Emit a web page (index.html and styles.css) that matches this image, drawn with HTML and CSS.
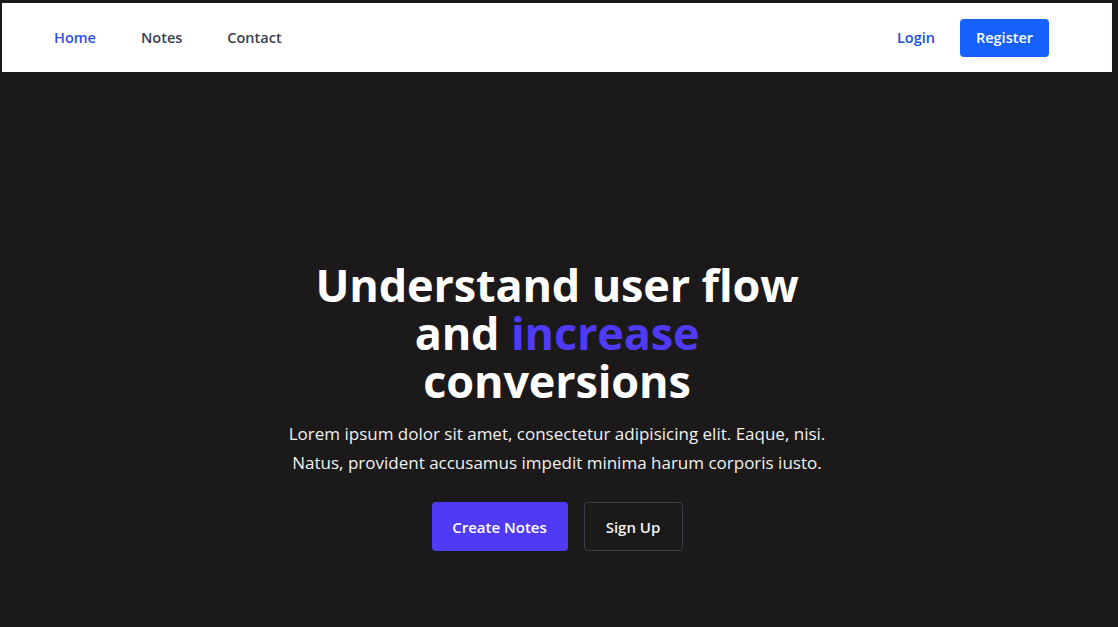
FILE: index.html
```html
<!DOCTYPE html>
<html lang="en">
<head>
<meta charset="utf-8">
<title>Notes</title>
<link rel="stylesheet" href="styles.css">
</head>
<body>
<nav class="nav">
  <div class="nav-left">
    <a class="nav-link active" href="#">Home</a>
    <a class="nav-link" href="#">Notes</a>
    <a class="nav-link" href="#">Contact</a>
  </div>
  <div class="nav-right">
    <a class="login" href="#">Login</a>
    <a class="register" href="#">Register</a>
  </div>
</nav>
<main class="hero">
  <h1 class="title">Understand user flow<br>and <span class="accent">increase</span><br>conversions</h1>
  <p class="lead">Lorem ipsum dolor sit amet, consectetur adipisicing elit. Eaque, nisi.<br>Natus, provident accusamus impedit minima harum corporis iusto.</p>
  <div class="actions">
    <a class="btn btn-primary" href="#">Create Notes</a>
    <a class="btn btn-outline" href="#">Sign Up</a>
  </div>
</main>
</body>
</html>
```
FILE: styles.css
```css
html, body {
  margin: 0;
  padding: 0;
}
body {
  background: #1b1919;
  font-family: "Open Sans", "Noto Sans", sans-serif;
  min-height: 627px;
  padding: 3px 6px 0 2px;
  box-sizing: border-box;
}
a { text-decoration: none; }
.nav {
  background: #ffffff;
  height: 69px;
  display: flex;
  align-items: center;
  justify-content: space-between;
  padding: 0 63px 0 52px;
}
.nav-left {
  display: flex;
}
.nav-link {
  font-size: 14.5px;
  font-weight: 600;
  color: #374151;
  margin-right: 45px;
}
.nav-link.active { color: #2f4de6; }
.nav-right {
  display: flex;
  align-items: center;
  gap: 24px;
}
.login {
  font-size: 14.5px;
  font-weight: 600;
  color: #1d4ed8;
  margin-right: 1px;
}
.register {
  background: #1660fe;
  color: #fff;
  font-size: 14.5px;
  font-weight: 600;
  width: 89px;
  height: 38px;
  border-radius: 4px;
  display: flex;
  align-items: center;
  justify-content: center;
}
.hero {
  display: flex;
  flex-direction: column;
  align-items: center;
  padding-top: 189px;
  text-align: center;
}
.title {
  margin: 0;
  color: #ffffff;
  font-size: 45px;
  line-height: 48px;
  font-weight: 700;
  letter-spacing: -0.15px;
}
.accent { color: #4f3af6; }
.lead {
  margin: 14px 0 0;
  color: #f1f1f1;
  font-size: 17px;
  line-height: 29px;
}
.actions {
  display: flex;
  gap: 16px;
  margin-top: 25px;
}
.btn {
  height: 49px;
  display: flex;
  align-items: center;
  justify-content: center;
  border-radius: 4px;
  font-size: 15px;
  font-weight: 600;
  color: #fff;
  box-sizing: border-box;
}
.btn-primary {
  background: #4f3af6;
  width: 136px;
}
.btn-outline {
  width: 99px;
  border: 1px solid #3a3b47;
  color: #f3f3f3;
}
```
